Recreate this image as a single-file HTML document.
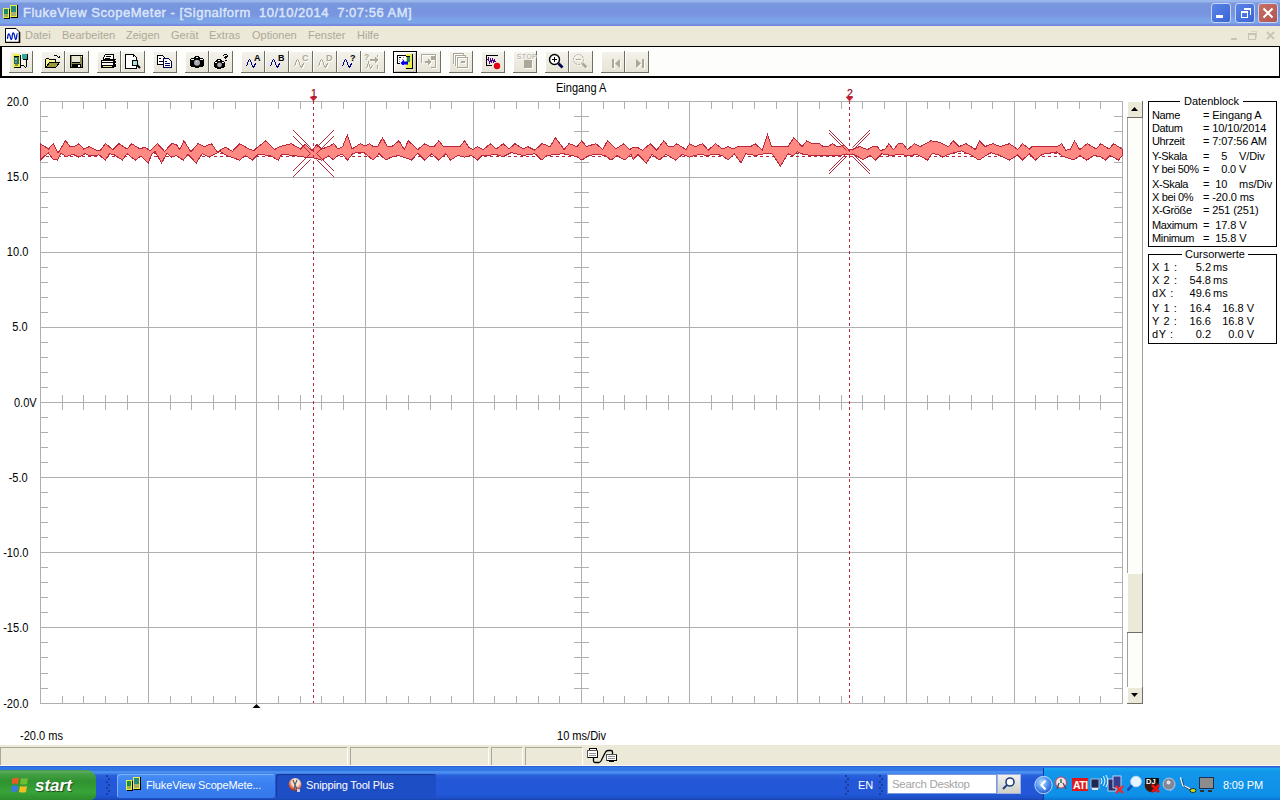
<!DOCTYPE html><html><head><meta charset="utf-8"><style>
*{margin:0;padding:0;box-sizing:border-box}
body{width:1280px;height:800px;overflow:hidden;background:#fff;position:relative;font-family:"Liberation Sans",sans-serif}
.a{position:absolute}
#title{left:0;top:0;width:1280px;height:26px;background:linear-gradient(#9cb8ee 0px,#98b4ec 2px,#7b99dc 3px,#7895df 7px,#7894e0 14px,#7ba4e8 20px,#7ba6e8 23px,#7586de 25px,#7586de 26px)}
#title .t{left:23px;top:5px;font-size:13px;font-weight:normal;color:#dae6f9;white-space:nowrap;letter-spacing:0.5px;-webkit-text-stroke:0.45px #dae6f9}
.wb{position:absolute;top:3px;width:20px;height:20px;border:1px solid #c8d4f4;border-radius:3px;background:linear-gradient(135deg,#5a84e8,#3a64d4)}
#menu{left:0;top:26px;width:1280px;height:20px;background:#ece9d8}
.mi{position:absolute;top:3px;font-size:11px;color:#aca899;white-space:nowrap}
#tb{left:0;top:46px;width:1280px;height:32px;border-top:1px solid #000;border-left:2px solid #000;border-right:1px solid #000;border-bottom:2px solid #000;background:#fdfdfb}
.btn{position:absolute;top:4px;width:24px;height:22px;background:linear-gradient(#f4f3ec,#e6e3d6);border-right:1px solid #716f64;border-bottom:1px solid #716f64;box-shadow:inset 1px 1px 0 #fff}
.btn.pr{border:1px solid #000;background:linear-gradient(135deg,#ffffff 0%,#f2f0e8 40%,#d8d4c4 100%);box-shadow:inset 1px 1px 0 #fff, inset -1px -1px 0 #c8c4b4}
.lab{position:absolute;font-size:12px;color:#000;white-space:nowrap;line-height:14px;transform:scaleX(0.92)}
.lab.r{transform-origin:100% 0}
.lab.l{transform-origin:0 0}
.db{position:absolute;border:1px solid #000;background:#fff}
.dt{position:absolute;font-size:11px;line-height:13px;white-space:nowrap;color:#000}
#status{left:0;top:745px;width:1280px;height:21px;background:#ece9d8;border-bottom:1px solid #fbfbf6}
.pn{position:absolute;top:2px;height:18px;border-top:1px solid #aca899;border-left:1px solid #aca899;border-right:1px solid #fff}
#task{left:0;top:766px;width:1280px;height:34px;background:linear-gradient(#2a62d0 0px,#2a62d0 1px,#3276e6 1px,#3276e6 5px,#4a8ef0 5px,#4a8ef0 7px,#2a62dc 9px,#2457d8 14px,#2258d8 28px,#1e50c8 32px,#1a44b0 34px)}
.tt{position:absolute;font-size:11px;color:#fff;white-space:nowrap;letter-spacing:-0.15px}
</style></head><body>
<div id="title" class="a">
<svg class="a" style="left:0;top:0" width="22" height="22" shape-rendering="crispEdges"><rect x="3" y="8" width="6" height="10" rx="1" fill="#e8f040"/><rect x="4" y="9" width="4" height="5" fill="#1a8a60"/><rect x="4" y="14" width="4" height="3" fill="#a0b060"/><path d="M9.5,9V18.5H4" stroke="#000" fill="none"/><rect x="10" y="5" width="7" height="12" rx="1" fill="#e8f040"/><rect x="11" y="6" width="5" height="6" fill="#2a8a80"/><rect x="11" y="12" width="5" height="4" fill="#a8b070"/><path d="M17.5,5V17.5H11" stroke="#000" fill="none"/></svg>
<div class="a t">FlukeView ScopeMeter - [Signalform&nbsp; 10/10/2014&nbsp; 7:07:56 AM]</div>
<div class="wb" style="left:1211px"><div class="a" style="left:4px;top:11px;width:7px;height:3px;background:#fff"></div></div>
<div class="wb" style="left:1235px"><div class="a" style="left:5px;top:7px;width:7px;height:7px;border:1px solid #fff;border-top-width:2px"></div><div class="a" style="left:8px;top:4px;width:7px;height:7px;border:1px solid #fff;border-top-width:2px;border-left:none;border-bottom:none"></div></div>
<div class="wb" style="left:1258px;background:linear-gradient(135deg,#c87062,#b05450)"><svg class="a" style="left:0;top:0" width="18" height="18"><path d="M4.5,4.5L13.5,13.5M13.5,4.5L4.5,13.5" stroke="#fff" stroke-width="2"/></svg></div>
</div>
<div id="menu" class="a">
<svg class="a" style="left:5px;top:2px" width="16" height="15" viewBox="0 0 16 15"><path d="M0.5,0.5 L11,0.5 L14.5,4 L14.5,14.5 L0.5,14.5Z" fill="#fff" stroke="#000"/><path d="M14.5,4 L14.5,14.5 L0.5,14.5" stroke="#000" stroke-width="1.6" fill="none"/><path d="M2.5,11 Q3,5 4,6 Q5,7 5.5,10 Q6,13 7,10 Q7.5,4 8.5,5 Q9.5,6 10,10 Q10.5,13 11.5,10 Q12,5 12.5,6" stroke="#0020c0" stroke-width="1.3" fill="none"/></svg>
<span class="mi" style="left:25px">Datei</span>
<span class="mi" style="left:62px">Bearbeiten</span>
<span class="mi" style="left:126px">Zeigen</span>
<span class="mi" style="left:171px">Gerät</span>
<span class="mi" style="left:209px">Extras</span>
<span class="mi" style="left:252px">Optionen</span>
<span class="mi" style="left:308px">Fenster</span>
<span class="mi" style="left:357px">Hilfe</span>
<svg class="a" style="left:1228px;top:2px" width="52" height="16" shape-rendering="crispEdges"><path d="M3,10.5h6" stroke="#c8c4b4" stroke-width="2"/><rect x="20.5" y="5.5" width="7" height="6" fill="none" stroke="#c8c4b4"/><path d="M20.5,6.5h7" stroke="#c8c4b4"/><path d="M22.5,3.5h6v6" stroke="#d4d0c4" fill="none"/><path d="M39,4L46,11M46,4L39,11" stroke="#c8c4b4" stroke-width="1.8" shape-rendering="auto"/></svg>
</div>
<div id="tb" class="a"></div>
<div class="a" style="left:0;top:47px;width:0;height:0"><div class="a btn" style="left:9px"><svg width="24" height="22" viewBox="0 0 24 22" shape-rendering="crispEdges" style="position:absolute;left:0;top:0"><rect x="4" y="3" width="7" height="14" fill="#e8f048"/><path d="M11.5,4V16.5H5" stroke="#000" fill="none"/><rect x="5" y="5" width="5" height="8" fill="#2c6c60"/><path d="M5,5.5H10" stroke="#000"/><rect x="6" y="7" width="2" height="2" fill="#80d0d0"/><rect x="6" y="10" width="2" height="2" fill="#7080c0"/><rect x="6" y="13" width="3" height="2" fill="#909040"/><rect x="13" y="3" width="5" height="5" fill="#30a8a0"/><path d="M18.5,2.5V8.5H13.5M12,14.5H14.5L16.5,16.5L17.5,15.5V8.5" stroke="#000" fill="none"/><rect x="12" y="9" width="4" height="5" fill="#f4f4ec"/></svg></div>
<div class="a btn" style="left:41px"><svg width="24" height="22" viewBox="0 0 24 22" shape-rendering="crispEdges" style="position:absolute;left:0;top:0"><path d="M4.5,15.5V8.5L5.5,7.5H7.5L8.5,8.5H14.5V11" fill="#f8f898" stroke="#000"/><path d="M5,16 L9,11 L19,11 L15,16Z" fill="#9a9a3a" stroke="#000"/><path d="M12.5,5.5L13.5,4.5H15.5L17.5,6.5" stroke="#000" fill="none"/><path d="M16,7H19V5Z" fill="#000"/></svg></div>
<div class="a btn" style="left:65px"><svg width="24" height="22" viewBox="0 0 24 22" shape-rendering="crispEdges" style="position:absolute;left:0;top:0"><rect x="5" y="4" width="13" height="13" fill="#000"/><rect x="6" y="5" width="11" height="11" fill="#8c8c50"/><rect x="7" y="5" width="8" height="6" fill="#e8e6d4"/><rect x="7" y="11" width="8" height="1" fill="#000"/><rect x="7" y="13" width="9" height="4" fill="#000"/><rect x="13" y="14" width="2" height="2" fill="#fff"/><rect x="16" y="5" width="1" height="1" fill="#fff"/></svg></div>
<div class="a btn" style="left:97px"><svg width="24" height="22" viewBox="0 0 24 22" shape-rendering="crispEdges" style="position:absolute;left:0;top:0"><path d="M8.5,3.5H16.5V8.5H6.5V6.5Z" fill="#fff" stroke="#000"/><path d="M9,5.5H14M8,7.5H13" stroke="#000"/><rect x="4" y="9" width="13" height="8" fill="#000"/><rect x="5" y="10" width="11" height="1" fill="#fff"/><rect x="5" y="12" width="11" height="2" fill="#fafaf0"/><rect x="6" y="15" width="9" height="1" fill="#ecec9c"/><rect x="17" y="8" width="2" height="8" fill="#000"/><path d="M17.5,9.5h1M17.5,12.5h1" stroke="#fff"/></svg></div>
<div class="a btn" style="left:121px"><svg width="24" height="22" viewBox="0 0 24 22" shape-rendering="crispEdges" style="position:absolute;left:0;top:0"><path d="M4.5,3.5H12.5L15.5,6.5V17.5H4.5Z" fill="#fff" stroke="#000"/><rect x="12" y="4" width="1" height="2" fill="#000"/><circle cx="14" cy="12" r="3" fill="#a8e0d8" stroke="#000"/><path d="M16,14L19,17" stroke="#000" stroke-width="2" shape-rendering="auto"/></svg></div>
<div class="a btn" style="left:153px"><svg width="24" height="22" viewBox="0 0 24 22" shape-rendering="crispEdges" style="position:absolute;left:0;top:0"><path d="M4.5,4.5H9.5L11.5,6.5V13.5H4.5Z" fill="#fff" stroke="#000"/><path d="M6,7.5H8M6,10.5H10" stroke="#000"/><path d="M10.5,7.5H15.5L18.5,10.5V16.5H10.5Z" fill="#fff" stroke="#000050"/><path d="M12,10.5H14M12,12.5H17M12,14.5H17" stroke="#000050"/></svg></div>
<div class="a btn" style="left:185px"><svg width="24" height="22" viewBox="0 0 24 22" shape-rendering="crispEdges" style="position:absolute;left:0;top:0"><path d="M10,5H14V6H15V7H18V8H19V15H18V16H14V17H10V16H6V15H5V8H6V7H9V6H10Z" fill="#000"/><path d="M11,6h2v1h-2zM6,8h3v1h-3zM15,8h3v1h-3z" fill="#f4f4f0"/><circle cx="12" cy="11.8" r="3" fill="#a8a8b0" shape-rendering="auto"/><rect x="11" y="10" width="1" height="1" fill="#e8e8f0"/></svg></div>
<div class="a btn" style="left:209px"><svg width="24" height="22" viewBox="0 0 24 22" shape-rendering="crispEdges" style="position:absolute;left:0;top:0"><path d="M8,8H12V9H13V10H15V11H16V16H15V17H12V18H8V17H6V16H5V11H6V10H7V9H8Z" fill="#000"/><path d="M9,9h2v1h-2zM6,11h2v1h-2zM13,11h2v1h-2z" fill="#f4f4f0"/><circle cx="10.5" cy="13.8" r="2.4" fill="#a8a8b0" shape-rendering="auto"/><path d="M14,4H15V3H18V4H19V6H18V7H17V8H16V7H15V6H16V5H18V4H15V5H14Z" fill="#000"/><rect x="16" y="9" width="2" height="1" fill="#000"/></svg></div>
<div class="a btn" style="left:241px"><svg width="24" height="22" viewBox="0 0 24 22" shape-rendering="crispEdges" style="position:absolute;left:0;top:0"><path d="M5.5,15.5L6.5,12.5L7.5,9.5L8.5,8.5L9.5,9.5L10.5,12.5L11.5,15L12.5,16.5L13.5,15L14.5,12.5" fill="none" stroke="#000080" stroke-width="1.1"/><text x="13.6" y="9.8" font-size="9.5" font-weight="bold" fill="#000" font-family="Liberation Sans" transform="scale(0.95,1)">A</text></svg></div>
<div class="a btn" style="left:265px"><svg width="24" height="22" viewBox="0 0 24 22" shape-rendering="crispEdges" style="position:absolute;left:0;top:0"><path d="M5.5,15.5L6.5,12.5L7.5,9.5L8.5,8.5L9.5,9.5L10.5,12.5L11.5,15L12.5,16.5L13.5,15L14.5,12.5" fill="none" stroke="#000080" stroke-width="1.1"/><text x="13.6" y="9.8" font-size="9.5" font-weight="bold" fill="#000" font-family="Liberation Sans" transform="scale(0.95,1)">B</text></svg></div>
<div class="a btn" style="left:289px"><svg width="24" height="22" viewBox="0 0 24 22" shape-rendering="crispEdges" style="position:absolute;left:0;top:0"><g transform="translate(1,1)" opacity="0.9"><path d="M5.5,15.5L6.5,12.5L7.5,9.5L8.5,8.5L9.5,9.5L10.5,12.5L11.5,15L12.5,16.5L13.5,15L14.5,12.5" fill="none" stroke="#ffffff" stroke-width="1.1"/><text x="13.6" y="9.8" font-size="9.5" font-weight="bold" fill="#ffffff" font-family="Liberation Sans" transform="scale(0.95,1)">C</text></g><path d="M5.5,15.5L6.5,12.5L7.5,9.5L8.5,8.5L9.5,9.5L10.5,12.5L11.5,15L12.5,16.5L13.5,15L14.5,12.5" fill="none" stroke="#aca899" stroke-width="1.1"/><text x="13.6" y="9.8" font-size="9.5" font-weight="bold" fill="#aca899" font-family="Liberation Sans" transform="scale(0.95,1)">C</text></svg></div>
<div class="a btn" style="left:313px"><svg width="24" height="22" viewBox="0 0 24 22" shape-rendering="crispEdges" style="position:absolute;left:0;top:0"><g transform="translate(1,1)" opacity="0.9"><path d="M5.5,15.5L6.5,12.5L7.5,9.5L8.5,8.5L9.5,9.5L10.5,12.5L11.5,15L12.5,16.5L13.5,15L14.5,12.5" fill="none" stroke="#ffffff" stroke-width="1.1"/><text x="13.6" y="9.8" font-size="9.5" font-weight="bold" fill="#ffffff" font-family="Liberation Sans" transform="scale(0.95,1)">D</text></g><path d="M5.5,15.5L6.5,12.5L7.5,9.5L8.5,8.5L9.5,9.5L10.5,12.5L11.5,15L12.5,16.5L13.5,15L14.5,12.5" fill="none" stroke="#aca899" stroke-width="1.1"/><text x="13.6" y="9.8" font-size="9.5" font-weight="bold" fill="#aca899" font-family="Liberation Sans" transform="scale(0.95,1)">D</text></svg></div>
<div class="a btn" style="left:337px"><svg width="24" height="22" viewBox="0 0 24 22" shape-rendering="crispEdges" style="position:absolute;left:0;top:0"><path d="M5.5,15.5L6.5,12.5L7.5,9.5L8.5,8.5L9.5,9.5L10.5,12.5L11.5,15L12.5,16.5L13.5,15L14.5,12.5" fill="none" stroke="#000080" stroke-width="1.1"/><text x="13.6" y="9.8" font-size="9.5" font-weight="bold" fill="#000" font-family="Liberation Sans" transform="scale(0.95,1)">?</text></svg></div>
<div class="a btn" style="left:361px"><svg width="24" height="22" viewBox="0 0 24 22" shape-rendering="crispEdges" style="position:absolute;left:0;top:0"><g transform="translate(1,1)" opacity="0.9"><text x="3" y="9" font-size="8.5" font-weight="bold" fill="#ffffff" font-family="Liberation Sans">?</text><path d="M9,8H14V6L17,9L14,12V10H9Z" fill="#ffffff"/><path d="M5.5,17.5L7.5,11.5L9.5,17.5L11.5,14.5" stroke="#ffffff" fill="none"/><path d="M16.5,3.5v2M16.5,13.5v4" stroke="#ffffff"/></g><text x="3" y="9" font-size="8.5" font-weight="bold" fill="#aca899" font-family="Liberation Sans">?</text><path d="M9,8H14V6L17,9L14,12V10H9Z" fill="#aca899"/><path d="M5.5,17.5L7.5,11.5L9.5,17.5L11.5,14.5" stroke="#aca899" fill="none"/><path d="M16.5,3.5v2M16.5,13.5v4" stroke="#aca899"/></svg></div>
<div class="a btn pr" style="left:393px"><svg width="24" height="22" viewBox="0 0 24 22" shape-rendering="crispEdges" style="position:absolute;left:0;top:0"><rect x="3" y="3" width="10" height="9" fill="#fff"/><path d="M3.5,12V3.5H12.5" stroke="#000" fill="none"/><path d="M3,11.5H6" stroke="#000"/><path d="M5,5.5h2" stroke="#000"/><path d="M9,5.5h1M5,7.5h1M8,7.5h1M5,9.5h1" stroke="#8890a0"/><rect x="12" y="2" width="6" height="14" fill="#e8f048"/><path d="M18.5,2V16.5H12" stroke="#000" fill="none"/><path d="M12,4.5H16" stroke="#000"/><rect x="13" y="5" width="3" height="5" fill="#2a8080"/><path d="M13,10h1v1h-1zM13,12h1v1h-1z" fill="#90a040"/><path d="M6.5,11L10,7.5V9.5H14V12.5H10V14.5Z" fill="#0000e8" shape-rendering="auto"/><rect x="8" y="13" width="3" height="2" fill="#e0e8ff"/></svg></div>
<div class="a btn" style="left:417px"><svg width="24" height="22" viewBox="0 0 24 22" shape-rendering="crispEdges" style="position:absolute;left:0;top:0"><g transform="translate(1,1)" opacity="0.9"><path d="M4.5,11.5V3.5H13.5" stroke="#ffffff" fill="none"/><path d="M13.5,3.5H18.5V16.5H13.5" stroke="#ffffff" fill="none"/><rect x="14" y="5" width="4" height="4" fill="#ffffff"/><path d="M8,10H11V8L14,11L11,14V12H8Z" fill="#ffffff"/></g><path d="M4.5,11.5V3.5H13.5" stroke="#aca899" fill="none"/><path d="M13.5,3.5H18.5V16.5H13.5" stroke="#aca899" fill="none"/><rect x="14" y="5" width="4" height="4" fill="#aca899"/><path d="M8,10H11V8L14,11L11,14V12H8Z" fill="#aca899"/></svg></div>
<div class="a btn" style="left:449px"><svg width="24" height="22" viewBox="0 0 24 22" shape-rendering="crispEdges" style="position:absolute;left:0;top:0"><g transform="translate(1,1)" opacity="0.9"><path d="M4.5,12.5V2.5H14.5V4.5" stroke="#ffffff" fill="none"/><path d="M6.5,14.5V4.5H16.5V6.5" stroke="#ffffff" fill="none"/><rect x="8.5" y="6.5" width="10" height="10" fill="none" stroke="#ffffff"/><path d="M11,11L13,9V10H16V12H13V13Z" fill="#ffffff"/></g><path d="M4.5,12.5V2.5H14.5V4.5" stroke="#aca899" fill="none"/><path d="M6.5,14.5V4.5H16.5V6.5" stroke="#aca899" fill="none"/><rect x="8.5" y="6.5" width="10" height="10" fill="none" stroke="#aca899"/><path d="M11,11L13,9V10H16V12H13V13Z" fill="#aca899"/></svg></div>
<div class="a btn" style="left:481px"><svg width="24" height="22" viewBox="0 0 24 22" shape-rendering="crispEdges" style="position:absolute;left:0;top:0"><path d="M5.5,14.5V4.5H17" stroke="#000" fill="none"/><path d="M5,14.5H11" stroke="#000"/><path d="M6.5,9.5L7.5,7.5L8.5,12.5L9.5,8.5L10.5,10.5L11.5,8.5L12.5,10.5L13.5,8.5V10.5H15" stroke="#500080" fill="none"/><circle cx="16" cy="15" r="3.2" fill="#e00010" shape-rendering="auto"/></svg></div>
<div class="a btn" style="left:513px"><svg width="24" height="22" viewBox="0 0 24 22" shape-rendering="crispEdges" style="position:absolute;left:0;top:0"><g transform="translate(1,1)" opacity="0.9"><text x="4" y="7.5" font-size="6.5" fill="#ffffff" font-family="Liberation Sans" letter-spacing="0.6">STOP</text><rect x="11" y="9" width="8" height="8" fill="#ffffff"/></g><text x="4" y="7.5" font-size="6.5" fill="#aca899" font-family="Liberation Sans" letter-spacing="0.6">STOP</text><rect x="11" y="9" width="8" height="8" fill="#aca899"/></svg></div>
<div class="a btn" style="left:545px"><svg width="24" height="22" viewBox="0 0 24 22" shape-rendering="crispEdges" style="position:absolute;left:0;top:0"><circle cx="9.5" cy="8.5" r="5" fill="#fff" stroke="#000" stroke-width="1.4" shape-rendering="auto"/><path d="M7,8.5h5M9.5,6v5" stroke="#000" stroke-width="1.2"/><path d="M13.5,12.5L17.5,16.5" stroke="#000050" stroke-width="2.8" shape-rendering="auto"/></svg></div>
<div class="a btn" style="left:569px"><svg width="24" height="22" viewBox="0 0 24 22" shape-rendering="crispEdges" style="position:absolute;left:0;top:0"><g transform="translate(1,1)" opacity="0.9"><circle cx="9.5" cy="8.5" r="5" fill="none" stroke="#ffffff" stroke-width="1" stroke-dasharray="2,1" shape-rendering="auto"/><path d="M7,8.5h5" stroke="#ffffff"/><path d="M13.5,12.5L17.5,16.5" stroke="#ffffff" stroke-width="2.5" shape-rendering="auto"/></g><circle cx="9.5" cy="8.5" r="5" fill="none" stroke="#aca899" stroke-width="1" stroke-dasharray="2,1" shape-rendering="auto"/><path d="M7,8.5h5" stroke="#aca899"/><path d="M13.5,12.5L17.5,16.5" stroke="#aca899" stroke-width="2.5" shape-rendering="auto"/></svg></div>
<div class="a btn" style="left:601px"><svg width="24" height="22" viewBox="0 0 24 22" shape-rendering="crispEdges" style="position:absolute;left:0;top:0"><g transform="translate(1,1)" opacity="0.9"><rect x="11" y="8" width="2" height="9" fill="#ffffff"/><path d="M14,12.5L19,8V17Z" fill="#ffffff" shape-rendering="auto"/></g><rect x="11" y="8" width="2" height="9" fill="#aca899"/><path d="M14,12.5L19,8V17Z" fill="#aca899" shape-rendering="auto"/></svg></div>
<div class="a btn" style="left:625px"><svg width="24" height="22" viewBox="0 0 24 22" shape-rendering="crispEdges" style="position:absolute;left:0;top:0"><g transform="translate(1,1)" opacity="0.9"><rect x="17" y="8" width="2" height="9" fill="#ffffff"/><path d="M16,12.5L11,8V17Z" fill="#ffffff" shape-rendering="auto"/></g><rect x="17" y="8" width="2" height="9" fill="#aca899"/><path d="M16,12.5L11,8V17Z" fill="#aca899" shape-rendering="auto"/></svg></div></div>
<svg class="a" style="left:0;top:0" width="1280" height="745" viewBox="0 0 1280 745">
<rect x="40.5" y="101.5" width="1082" height="602" fill="none" stroke="#b0b0b0"/>
<line x1="148.5" y1="101" x2="148.5" y2="703" stroke="#b0b0b0"/>
<line x1="256.5" y1="101" x2="256.5" y2="703" stroke="#b0b0b0"/>
<line x1="365.5" y1="101" x2="365.5" y2="703" stroke="#b0b0b0"/>
<line x1="473.5" y1="101" x2="473.5" y2="703" stroke="#b0b0b0"/>
<line x1="581.5" y1="101" x2="581.5" y2="703" stroke="#b0b0b0"/>
<line x1="689.5" y1="101" x2="689.5" y2="703" stroke="#b0b0b0"/>
<line x1="797.5" y1="101" x2="797.5" y2="703" stroke="#b0b0b0"/>
<line x1="906.5" y1="101" x2="906.5" y2="703" stroke="#b0b0b0"/>
<line x1="1014.5" y1="101" x2="1014.5" y2="703" stroke="#b0b0b0"/>
<line x1="40" y1="177.5" x2="1122" y2="177.5" stroke="#b0b0b0"/>
<line x1="40" y1="252.5" x2="1122" y2="252.5" stroke="#b0b0b0"/>
<line x1="40" y1="327.5" x2="1122" y2="327.5" stroke="#b0b0b0"/>
<line x1="40" y1="402.5" x2="1122" y2="402.5" stroke="#b0b0b0"/>
<line x1="40" y1="477.5" x2="1122" y2="477.5" stroke="#b0b0b0"/>
<line x1="40" y1="552.5" x2="1122" y2="552.5" stroke="#b0b0b0"/>
<line x1="40" y1="627.5" x2="1122" y2="627.5" stroke="#b0b0b0"/>
<path d="M62.5,101v8M62.5,696v8M62.5,395v15M83.5,101v8M83.5,696v8M83.5,395v15M105.5,101v8M105.5,696v8M105.5,395v15M127.5,101v8M127.5,696v8M127.5,395v15M170.5,101v8M170.5,696v8M170.5,395v15M191.5,101v8M191.5,696v8M191.5,395v15M213.5,101v8M213.5,696v8M213.5,395v15M235.5,101v8M235.5,696v8M235.5,395v15M278.5,101v8M278.5,696v8M278.5,395v15M300.5,101v8M300.5,696v8M300.5,395v15M321.5,101v8M321.5,696v8M321.5,395v15M343.5,101v8M343.5,696v8M343.5,395v15M386.5,101v8M386.5,696v8M386.5,395v15M408.5,101v8M408.5,696v8M408.5,395v15M430.5,101v8M430.5,696v8M430.5,395v15M451.5,101v8M451.5,696v8M451.5,395v15M494.5,101v8M494.5,696v8M494.5,395v15M516.5,101v8M516.5,696v8M516.5,395v15M538.5,101v8M538.5,696v8M538.5,395v15M559.5,101v8M559.5,696v8M559.5,395v15M603.5,101v8M603.5,696v8M603.5,395v15M624.5,101v8M624.5,696v8M624.5,395v15M646.5,101v8M646.5,696v8M646.5,395v15M668.5,101v8M668.5,696v8M668.5,395v15M711.5,101v8M711.5,696v8M711.5,395v15M732.5,101v8M732.5,696v8M732.5,395v15M754.5,101v8M754.5,696v8M754.5,395v15M776.5,101v8M776.5,696v8M776.5,395v15M819.5,101v8M819.5,696v8M819.5,395v15M841.5,101v8M841.5,696v8M841.5,395v15M862.5,101v8M862.5,696v8M862.5,395v15M884.5,101v8M884.5,696v8M884.5,395v15M927.5,101v8M927.5,696v8M927.5,395v15M949.5,101v8M949.5,696v8M949.5,395v15M971.5,101v8M971.5,696v8M971.5,395v15M992.5,101v8M992.5,696v8M992.5,395v15M1035.5,101v8M1035.5,696v8M1035.5,395v15M1057.5,101v8M1057.5,696v8M1057.5,395v15M1079.5,101v8M1079.5,696v8M1079.5,395v15M1100.5,101v8M1100.5,696v8M1100.5,395v15M40,116.5h8M1114,116.5h8M574,116.5h15M40,131.5h8M1114,131.5h8M574,131.5h15M40,147.5h8M1114,147.5h8M574,147.5h15M40,162.5h8M1114,162.5h8M574,162.5h15M40,192.5h8M1114,192.5h8M574,192.5h15M40,207.5h8M1114,207.5h8M574,207.5h15M40,222.5h8M1114,222.5h8M574,222.5h15M40,237.5h8M1114,237.5h8M574,237.5h15M40,267.5h8M1114,267.5h8M574,267.5h15M40,282.5h8M1114,282.5h8M574,282.5h15M40,297.5h8M1114,297.5h8M574,297.5h15M40,312.5h8M1114,312.5h8M574,312.5h15M40,342.5h8M1114,342.5h8M574,342.5h15M40,357.5h8M1114,357.5h8M574,357.5h15M40,372.5h8M1114,372.5h8M574,372.5h15M40,387.5h8M1114,387.5h8M574,387.5h15M40,417.5h8M1114,417.5h8M574,417.5h15M40,432.5h8M1114,432.5h8M574,432.5h15M40,447.5h8M1114,447.5h8M574,447.5h15M40,462.5h8M1114,462.5h8M574,462.5h15M40,492.5h8M1114,492.5h8M574,492.5h15M40,507.5h8M1114,507.5h8M574,507.5h15M40,522.5h8M1114,522.5h8M574,522.5h15M40,537.5h8M1114,537.5h8M574,537.5h15M40,567.5h8M1114,567.5h8M574,567.5h15M40,582.5h8M1114,582.5h8M574,582.5h15M40,597.5h8M1114,597.5h8M574,597.5h15M40,612.5h8M1114,612.5h8M574,612.5h15M40,642.5h8M1114,642.5h8M574,642.5h15M40,657.5h8M1114,657.5h8M574,657.5h15M40,673.5h8M1114,673.5h8M574,673.5h15M40,688.5h8M1114,688.5h8M574,688.5h15" stroke="#b0b0b0" fill="none"/>
<path d="M40,153.5H1122M40,156.5H1122" stroke="#b8283a" stroke-dasharray="3,3" shape-rendering="crispEdges"/>
<path d="M40.0,145.4L40.3,143.7L48.5,149.0L53.2,143.7L58.0,153.1L65.5,140.8L70.2,146.6L74.3,146.6L79.0,143.7L83.7,149.0L89.6,146.6L96.6,150.2L100.1,150.7L105.4,143.7L113.0,149.6L118.9,143.7L127.0,149.0L131.8,143.7L140.0,149.0L144.6,147.2L150.5,150.7L157.5,143.7L164.6,151.4L171.6,143.7L176.3,144.3L179.8,149.6L183.9,140.8L190.9,151.9L198.0,143.7L204.4,146.6L211.4,143.7L217.3,151.9L225.5,147.2L232.5,151.3L239.6,143.7L248.9,149.0L253.6,150.7L258.3,146.6L265.9,140.8L274.7,149.6L279.4,146.6L291.1,143.7L300.5,149.0L305.2,144.3L312.2,150.7L316.9,144.3L321.6,149.0L328.6,146.6L333.9,143.7L338.0,149.0L342.7,146.6L347.4,134.9L352.1,149.0L360.3,143.7L365.0,146.0L369.6,143.7L373.2,146.6L377.8,146.6L382.5,137.8L387.2,146.6L391.9,146.6L398.9,140.8L404.2,149.6L408.3,140.8L417.7,149.6L424.7,143.7L430.6,146.6L434.1,146.6L438.8,140.8L443.5,146.6L459.9,146.6L464.6,140.8L469.3,147.8L472.8,149.6L477.5,146.6L483.3,149.6L490.3,143.7L496.2,149.0L503.2,143.7L509.1,149.0L515.0,143.7L523.2,149.0L527.8,146.6L534.9,150.2L541.9,143.7L550.1,146.6L555.4,137.8L564.2,149.6L568.9,143.7L577.1,146.6L581.8,140.8L586.4,146.6L595.8,143.7L602.8,149.6L607.5,140.8L615.7,149.0L623.9,143.7L629.8,149.6L633.3,147.2L638.0,147.8L642.7,150.2L650.3,143.7L656.8,150.2L663.8,140.8L668.5,146.6L673.2,146.6L676.7,143.7L686.0,149.6L689.6,143.7L695.4,146.6L702.5,143.7L708.3,150.2L715.3,143.7L722.4,149.0L728.2,146.6L732.9,149.0L737.6,146.6L750.5,146.6L755.2,143.7L762.2,150.2L767.5,134.9L771.6,146.6L788.0,146.6L793.9,137.8L802.1,146.6L806.8,140.8L812.6,143.7L819.6,143.7L823.2,146.6L827.8,146.6L832.5,143.7L837.2,146.6L844.3,145.5L848.9,150.2L853.6,149.0L859.5,146.6L867.7,149.6L872.4,146.6L877.1,146.6L880.6,150.7L885.3,149.0L888.8,143.7L893.5,149.6L898.2,143.7L902.8,143.7L907.5,149.6L914.6,143.7L920.4,146.6L931.0,140.8L938.0,141.9L942.7,143.7L948.5,146.6L953.2,140.8L959.1,146.6L966.1,143.7L975.5,149.6L979.6,140.8L984.9,146.6L993.1,143.7L1000.1,146.6L1009.5,143.7L1017.7,149.6L1022.4,143.7L1029.4,149.0L1031.8,146.6L1057.5,146.6L1061.6,143.7L1065.7,150.2L1070.4,149.6L1074.5,140.8L1079.7,149.6L1087.3,143.7L1096.1,149.0L1100.8,143.7L1109.0,149.0L1113.7,143.7L1122.0,149.0L1122.0,149.0L1122.0,156.0L1122.0,156.0L1118.4,160.1L1110.2,155.5L1105.5,160.1L1100.8,156.6L1093.8,155.5L1086.7,160.1L1079.8,155.5L1073.9,160.1L1062.2,156.0L1056.4,151.9L1042.3,154.3L1035.3,160.1L1029.4,153.7L1022.4,160.1L1017.7,154.9L1009.5,160.1L1000.1,155.5L990.7,152.5L979.0,160.1L972.0,155.5L961.4,150.8L948.5,154.3L942.7,157.2L938.0,154.3L932.1,153.7L927.5,160.1L916.9,154.3L908.7,156.0L900.5,154.3L891.1,155.5L881.8,153.7L875.3,160.1L870.0,155.5L863.0,159.6L853.6,154.3L844.3,154.9L832.5,155.5L820.8,155.5L811.4,155.5L803.2,154.3L797.4,151.9L792.7,156.0L788.0,153.7L780.4,166.0L771.6,153.1L764.6,153.7L755.2,155.5L745.8,153.7L741.1,163.1L734.1,153.7L728.2,160.1L722.4,155.5L715.3,154.3L707.1,155.5L698.9,154.3L689.6,157.2L682.5,154.3L675.5,160.1L666.1,154.3L659.1,160.1L652.1,154.3L646.2,163.1L638.0,154.3L633.3,159.6L631.0,154.3L625.1,160.1L616.9,155.5L611.0,160.1L605.2,155.5L597.0,154.3L588.8,155.5L581.8,160.1L577.1,156.6L563.0,153.7L546.6,155.5L541.9,160.1L534.9,153.7L523.2,155.5L511.4,152.5L503.2,156.6L495.0,154.3L488.0,155.5L482.1,155.5L477.5,160.1L471.6,155.5L464.6,157.2L457.5,155.5L450.5,160.1L445.8,153.7L438.8,160.1L431.8,153.7L424.7,160.1L417.7,153.1L411.8,160.1L398.9,155.5L390.7,157.2L386.0,160.1L379.0,153.7L373.2,160.1L363.8,152.5L353.2,153.1L347.4,160.1L342.7,154.3L338.0,155.5L333.3,159.6L328.6,156.0L321.6,160.1L313.4,157.8L305.2,157.2L293.5,155.5L281.8,154.3L278.2,160.1L270.0,155.5L258.3,154.3L252.5,160.1L245.4,155.5L239.6,160.1L226.7,155.5L219.6,151.4L209.1,157.2L202.1,153.7L196.2,163.1L188.0,154.3L183.3,160.1L176.3,155.5L171.6,157.2L166.9,153.1L161.6,163.1L155.2,151.4L151.7,154.3L148.2,163.1L141.1,156.0L135.3,160.1L127.0,153.7L122.4,160.1L114.2,154.9L109.5,153.7L105.4,160.1L99.0,154.9L90.7,156.0L84.9,153.7L79.0,157.2L73.2,154.3L66.0,156.6L60.9,153.1L57.3,160.1L53.2,159.6L48.5,153.1L45.0,155.5L40.3,160.1L40.0,159.6Z" fill="#ff8a84" stroke="#b8283a" stroke-width="1" shape-rendering="crispEdges"/>
<line x1="313.5" y1="101" x2="313.5" y2="703" stroke="#b8283a" stroke-dasharray="3,3"/>
<text x="314.0" y="96.5" font-size="10.5" fill="#98102a" stroke="#98102a" stroke-width="0.25" text-anchor="middle" font-family="Liberation Sans">1</text>
<path d="M310,97 L317,97 L313.5,101 Z" fill="#d81830" stroke="#b01830" stroke-width="0.6"/>
<path d="M310.5,147.5L293.0,130.0M310.5,153.5L293.0,171.0M316.5,147.5L334.0,130.0M316.5,153.5L334.0,171.0M310.5,153.5L293.0,136.0M310.5,159.5L293.0,177.0M316.5,153.5L334.0,136.0M316.5,159.5L334.0,177.0" stroke="#b8283a" stroke-width="1" fill="none"/>
<line x1="849.5" y1="101" x2="849.5" y2="703" stroke="#b8283a" stroke-dasharray="3,3"/>
<text x="850.0" y="96.5" font-size="10.5" fill="#98102a" stroke="#98102a" stroke-width="0.25" text-anchor="middle" font-family="Liberation Sans">2</text>
<path d="M846,97 L853,97 L849.5,101 Z" fill="#d81830" stroke="#b01830" stroke-width="0.6"/>
<path d="M846.5,147.5L829.0,130.0M846.5,153.5L829.0,171.0M852.5,147.5L870.0,130.0M852.5,153.5L870.0,171.0M846.5,150.5L829.0,133.0M846.5,156.5L829.0,174.0M852.5,150.5L870.0,133.0M852.5,156.5L870.0,174.0" stroke="#b8283a" stroke-width="1" fill="none"/>
<path d="M252.5,708 L260.5,708 L256.5,704 Z" fill="#000"/>
</svg>
<div class="lab r" style="right:1252px;top:95px">20.0</div>
<div class="lab r" style="right:1252px;top:170px">15.0</div>
<div class="lab r" style="right:1252px;top:245px">10.0</div>
<div class="lab r" style="right:1252px;top:320px">5.0</div>
<div class="lab r" style="right:1243px;top:396px">0.0V</div>
<div class="lab r" style="right:1252px;top:471px">-5.0</div>
<div class="lab r" style="right:1252px;top:546px">-10.0</div>
<div class="lab r" style="right:1252px;top:621px">-15.0</div>
<div class="lab r" style="right:1252px;top:697px">-20.0</div>
<div class="lab l" style="left:20px;top:729px">-20.0 ms</div>
<div class="lab l" style="left:557px;top:729px">10 ms/Div</div>
<div class="lab l" style="left:556px;top:81px">Eingang A</div>
<div class="a" style="left:1127px;top:101px;width:16px;height:603px;background:#fdfdfa;border-left:1px solid #a0a0a0;border-right:1px solid #a0a0a0"></div>
<div class="a" style="left:1127px;top:101px;width:16px;height:17px;background:#ece9d8;border-right:1px solid #716f64;border-bottom:1px solid #716f64;box-shadow:inset 1px 1px 0 #fff"><svg class="a" style="left:4px;top:6px" width="8" height="5"><path d="M0,4L3.5,0L7,4Z" fill="#000"/></svg></div>
<div class="a" style="left:1127px;top:573px;width:16px;height:60px;background:#ece9d8;border-right:1px solid #716f64;border-bottom:1px solid #716f64;box-shadow:inset 1px 1px 0 #fff"></div>
<div class="a" style="left:1127px;top:687px;width:16px;height:17px;background:#ece9d8;border-right:1px solid #716f64;border-bottom:1px solid #716f64;box-shadow:inset 1px 1px 0 #fff"><svg class="a" style="left:4px;top:6px" width="8" height="5"><path d="M0,0L7,0L3.5,4Z" fill="#000"/></svg></div>

<div class="db" style="left:1148px;top:101px;width:129px;height:146px"></div>
<div class="dt" style="left:1180px;top:95px;padding:0 4px;background:#fff">Datenblock</div>
<div class="dt" style="left:1152px;top:109px;letter-spacing:-0.35px">Name</div><div class="dt" style="left:1203px;top:109px;letter-spacing:-0.1px">= Eingang A</div>
<div class="dt" style="left:1152px;top:122px;letter-spacing:-0.35px">Datum</div><div class="dt" style="left:1203px;top:122px;letter-spacing:-0.1px">= 10/10/2014</div>
<div class="dt" style="left:1152px;top:135px;letter-spacing:-0.35px">Uhrzeit</div><div class="dt" style="left:1203px;top:135px;letter-spacing:-0.1px">= 7:07:56 AM</div>
<div class="dt" style="left:1152px;top:150px;letter-spacing:-0.35px">Y-Skala</div><div class="dt" style="left:1203px;top:150px;letter-spacing:-0.1px">=&nbsp;&nbsp;&nbsp; 5&nbsp;&nbsp;&nbsp; V/Div</div>
<div class="dt" style="left:1152px;top:163px;letter-spacing:-0.35px">Y bei 50%</div><div class="dt" style="left:1203px;top:163px;letter-spacing:-0.1px">=&nbsp;&nbsp;&nbsp; 0.0 V</div>
<div class="dt" style="left:1152px;top:178px;letter-spacing:-0.35px">X-Skala</div><div class="dt" style="left:1203px;top:178px;letter-spacing:-0.1px">=&nbsp; 10&nbsp;&nbsp;&nbsp; ms/Div</div>
<div class="dt" style="left:1152px;top:191px;letter-spacing:-0.35px">X bei 0%</div><div class="dt" style="left:1203px;top:191px;letter-spacing:-0.1px">= -20.0 ms</div>
<div class="dt" style="left:1152px;top:204px;letter-spacing:-0.35px">X-Größe</div><div class="dt" style="left:1203px;top:204px;letter-spacing:-0.1px">= 251 (251)</div>
<div class="dt" style="left:1152px;top:219px;letter-spacing:-0.35px">Maximum</div><div class="dt" style="left:1203px;top:219px;letter-spacing:-0.1px">=&nbsp; 17.8 V</div>
<div class="dt" style="left:1152px;top:232px;letter-spacing:-0.35px">Minimum</div><div class="dt" style="left:1203px;top:232px;letter-spacing:-0.1px">=&nbsp; 15.8 V</div>
<div class="db" style="left:1148px;top:254px;width:129px;height:90px"></div>
<div class="dt" style="left:1182px;top:248px;padding:0 3px;background:#fff">Cursorwerte</div>
<div class="dt" style="left:1152px;top:261px;letter-spacing:0.6px">X 1 :</div><div class="dt" style="right:69px;top:261px">5.2</div>
<div class="dt" style="left:1213px;top:261px">ms</div>
<div class="dt" style="left:1152px;top:274px;letter-spacing:0.6px">X 2 :</div><div class="dt" style="right:69px;top:274px">54.8</div>
<div class="dt" style="left:1213px;top:274px">ms</div>
<div class="dt" style="left:1152px;top:287px;letter-spacing:0.6px">dX :</div><div class="dt" style="right:69px;top:287px">49.6</div>
<div class="dt" style="left:1213px;top:287px">ms</div>
<div class="dt" style="left:1152px;top:302px;letter-spacing:0.6px">Y 1 :</div><div class="dt" style="right:69px;top:302px">16.4</div>
<div class="dt" style="right:26px;top:302px">16.8 V</div>
<div class="dt" style="left:1152px;top:315px;letter-spacing:0.6px">Y 2 :</div><div class="dt" style="right:69px;top:315px">16.6</div>
<div class="dt" style="right:26px;top:315px">16.8 V</div>
<div class="dt" style="left:1152px;top:328px;letter-spacing:0.6px">dY :</div><div class="dt" style="right:69px;top:328px">0.2</div>
<div class="dt" style="right:26px;top:328px">0.0 V</div>
<div id="status" class="a">
<div class="pn" style="left:0;width:348px"></div>
<div class="pn" style="left:350px;width:139px"></div>
<div class="pn" style="left:491px;width:32px"></div>
<div class="pn" style="left:525px;width:58px"></div>
<svg class="a" style="left:580px;top:0px" width="45" height="21" shape-rendering="crispEdges"><rect x="9" y="3" width="7" height="2" fill="#fff" stroke="#000" stroke-width="1"/><rect x="7.5" y="5.5" width="10" height="7" fill="#fff" stroke="#555" /><path d="M17.5,5.5V12.5H8" stroke="#000" stroke-width="1.5" fill="none"/><path d="M9,8.5h7M9,10.5h7" stroke="#909090"/><rect x="26.5" y="9.5" width="10" height="6" fill="#fff" stroke="#555"/><path d="M36.5,9.5V15.5H27" stroke="#000" stroke-width="1.5" fill="none"/><path d="M28,11.5h7M28,13.5h7" stroke="#909090"/><path d="M29,16.5h5" stroke="#000" stroke-width="1.5"/><path d="M13.5,12.5V16Q13.5,17.5 15,17.5H19Q20,17.5 21,16L25,8Q26,5.5 28,5.5H31Q32.5,5.5 32.5,7V9" stroke="#000" stroke-width="1.3" fill="none" shape-rendering="auto"/></svg>
</div>
<div id="task" class="a">
<div class="a" style="left:0;top:4px;width:96px;height:30px;border-radius:0 9px 5px 0;background:linear-gradient(#3a8a3a 0px,#5cae5c 1px,#46a046 4px,#2f922f 11px,#38a438 22px,#2c8c2c 30px)"></div>
<svg class="a" style="left:11px;top:10px" width="19" height="18" viewBox="0 0 19 18"><path d="M1,3 Q4,1 8,2 L7,8 Q4,7 1,8Z" fill="#e85c20"/><path d="M10,2 Q13,3 17,2 L16,8 Q13,9 9,8Z" fill="#6ac030"/><path d="M1,10 Q4,9 7,10 L6,16 Q3,15 0,16Z" fill="#3a78e8"/><path d="M9,10 Q12,11 16,10 L15,16 Q12,17 8,16Z" fill="#f0c020"/></svg>
<div class="a" style="left:35px;top:10px;font-size:17px;font-weight:bold;font-style:italic;color:#fff;text-shadow:1px 1px 1px #1a4a1a">start</div>
<svg class="a" style="left:104px;top:9px" width="8" height="22"><rect x="2" y="0" width="2" height="2" fill="#1a3e9e"/><rect x="4" y="3" width="2" height="2" fill="#1a3e9e"/><rect x="2" y="6" width="2" height="2" fill="#1a3e9e"/><rect x="4" y="9" width="2" height="2" fill="#1a3e9e"/><rect x="2" y="12" width="2" height="2" fill="#1a3e9e"/><rect x="4" y="15" width="2" height="2" fill="#1a3e9e"/><rect x="2" y="18" width="2" height="2" fill="#1a3e9e"/></svg><svg class="a" style="left:843px;top:9px" width="8" height="22"><rect x="2" y="0" width="2" height="2" fill="#1a3e9e"/><rect x="4" y="3" width="2" height="2" fill="#1a3e9e"/><rect x="2" y="6" width="2" height="2" fill="#1a3e9e"/><rect x="4" y="9" width="2" height="2" fill="#1a3e9e"/><rect x="2" y="12" width="2" height="2" fill="#1a3e9e"/><rect x="4" y="15" width="2" height="2" fill="#1a3e9e"/><rect x="2" y="18" width="2" height="2" fill="#1a3e9e"/></svg><svg class="a" style="left:877px;top:9px" width="8" height="22"><rect x="2" y="0" width="2" height="2" fill="#1a3e9e"/><rect x="4" y="3" width="2" height="2" fill="#1a3e9e"/><rect x="2" y="6" width="2" height="2" fill="#1a3e9e"/><rect x="4" y="9" width="2" height="2" fill="#1a3e9e"/><rect x="2" y="12" width="2" height="2" fill="#1a3e9e"/><rect x="4" y="15" width="2" height="2" fill="#1a3e9e"/><rect x="2" y="18" width="2" height="2" fill="#1a3e9e"/></svg>
<div class="a" style="left:117px;top:8px;width:158px;height:24px;border-radius:3px;background:linear-gradient(#4a90f8,#3a80f0 40%,#3478ec);box-shadow:inset 1px 1px 0 #7ab0ff"></div>
<svg class="a" style="left:123px;top:6px" width="22" height="22" shape-rendering="crispEdges"><rect x="3" y="8" width="6" height="10" rx="1" fill="#e8f040"/><rect x="4" y="9" width="4" height="5" fill="#1a8a60"/><rect x="4" y="14" width="4" height="3" fill="#a0b060"/><path d="M9.5,9V18.5H4" stroke="#000" fill="none"/><rect x="10" y="5" width="7" height="12" rx="1" fill="#e8f040"/><rect x="11" y="6" width="5" height="6" fill="#2a8a80"/><rect x="11" y="12" width="5" height="4" fill="#a8b070"/><path d="M17.5,5V17.5H11" stroke="#000" fill="none"/></svg>
<div class="tt" style="left:146px;top:13px">FlukeView ScopeMete...</div>
<div class="a" style="left:276px;top:8px;width:160px;height:24px;border-radius:3px;background:#1e4ec6;box-shadow:inset 1px 1px 1px #183890"></div>
<svg class="a" style="left:287px;top:11px" width="16" height="16"><defs><radialGradient id="snip" cx="55%" cy="35%" r="60%"><stop offset="0" stop-color="#fff8f0"/><stop offset="0.5" stop-color="#f8d8c0"/><stop offset="1" stop-color="#b83020"/></radialGradient></defs><circle cx="8" cy="7.5" r="6.5" fill="url(#snip)"/><path d="M6,3L8,8L10,3M8,8L7,14M8,8L11,14" stroke="#505860" stroke-width="1.2" fill="none"/><path d="M10,12h3v3h-3z" fill="#c8d0e0"/></svg>
<div class="tt" style="left:306px;top:13px">Snipping Tool Plus</div>
<div class="tt" style="left:858px;top:13px">EN</div>
<div class="a" style="left:887px;top:8px;width:110px;height:20px;background:#fff;border:1px solid #7a9ae0"></div>
<div class="a" style="left:892px;top:12px;font-size:11.5px;color:#a4a4a4;white-space:nowrap;letter-spacing:-0.3px">Search Desktop</div>
<div class="a" style="left:997px;top:8px;width:24px;height:20px;background:linear-gradient(#f0f0f0,#d0d0c8);border:1px solid #a0b0e0"></div>
<svg class="a" style="left:1001px;top:10px" width="16" height="16"><circle cx="9" cy="6" r="4" fill="#fff" stroke="#204080" stroke-width="1.6"/><path d="M6,9L2,13" stroke="#204080" stroke-width="2"/></svg>
<div class="a" style="left:1043px;top:2px;width:237px;height:32px;background:linear-gradient(#18a8f0 0px,#1296ea 4px,#0e90e8 28px,#0a74d4 32px);border-left:1px solid #0a3ca8"></div>
<div class="tt" style="left:1223px;top:13px">8:09 PM</div>
</div>
<svg class="a" style="left:1030px;top:770px" width="190" height="30">
<defs><radialGradient id="chev" cx="40%" cy="35%" r="65%"><stop offset="0" stop-color="#b8dcff"/><stop offset="0.6" stop-color="#4a90f0"/><stop offset="1" stop-color="#2a60d0"/></radialGradient></defs>
<circle cx="13.5" cy="15" r="8.7" fill="url(#chev)" stroke="#d8ecff" stroke-width="0.8"/><path d="M15.5,10.5L11.5,15L15.5,19.5" stroke="#fff" stroke-width="2.2" fill="none"/>
<circle cx="31" cy="12.5" r="5.5" fill="#f0e4e8" stroke="#c05060" stroke-width="1.2"/><path d="M31,9v4M29,13l-2,6M33,13l3,6" stroke="#405060" stroke-width="1.3"/><path d="M30,10l2,3" stroke="#30a040"/>
<rect x="42" y="8" width="16" height="13" fill="#e01818"/><text x="43" y="19" font-size="10.5" font-weight="bold" fill="#fff" font-family="Liberation Sans" letter-spacing="-0.5">ATI</text>
<rect x="61" y="9" width="8" height="9" fill="#202850" stroke="#c8d0e8" stroke-width="0.8"/><rect x="62" y="18" width="6" height="2" fill="#e0e8f8"/><path d="M71,8q2,3 0,6M73.5,6q3,5 0,10M76,5q3.5,6 0,12" stroke="#fff" stroke-width="0.9" fill="none"/>
<rect x="72" y="12" width="0" height="0"/>
<rect x="78" y="9" width="8" height="12" fill="#283070" stroke="#e0e8f8" stroke-width="0.8"/><rect x="83" y="6" width="8" height="12" fill="#384090" stroke="#e0e8f8" stroke-width="0.8"/><path d="M86,16L93,23M93,16L86,23" stroke="#ff2020" stroke-width="2.2"/>
<circle cx="106" cy="11.5" r="5.3" fill="#e8f4ff" stroke="#c0d8f8"/><path d="M102,15.5L97.5,20.5" stroke="#1848b0" stroke-width="2.5"/>
<circle cx="122" cy="15" r="7.3" fill="#3a1a10"/><path d="M115,8h14v5h-14z" fill="#101010"/><text x="116" y="13.5" font-size="7.5" font-weight="bold" fill="#fff" font-family="Liberation Sans">DJ</text><path d="M122,15L129,22M129,15L122,22" stroke="#f01010" stroke-width="2.6"/>
<circle cx="139" cy="14" r="6" fill="#808898" stroke="#d0d4e0" stroke-width="0.8"/><circle cx="138.5" cy="12.5" r="2" fill="#e0e0e0"/><path d="M140,21q4,-2 5,-6" stroke="#9ec0f0" fill="none"/>
<path d="M150.5,7.5L153,15.5L160,19" stroke="#fff" stroke-width="1.4" fill="none"/><path d="M151,8L153.5,16L160,19.5" stroke="#000" stroke-width="0.6" fill="none" transform="translate(0.8,0.8)"/><ellipse cx="163" cy="20.5" rx="3" ry="2" fill="#c8e020" stroke="#000" stroke-width="0.7"/>
<rect x="169.5" y="7.5" width="14" height="11" fill="#8c8c8c" stroke="#203050" stroke-width="1"/><rect x="170" y="20" width="4" height="2" fill="#303030"/><rect x="178" y="20" width="4" height="2" fill="#303030"/>
</svg>
</body></html>
